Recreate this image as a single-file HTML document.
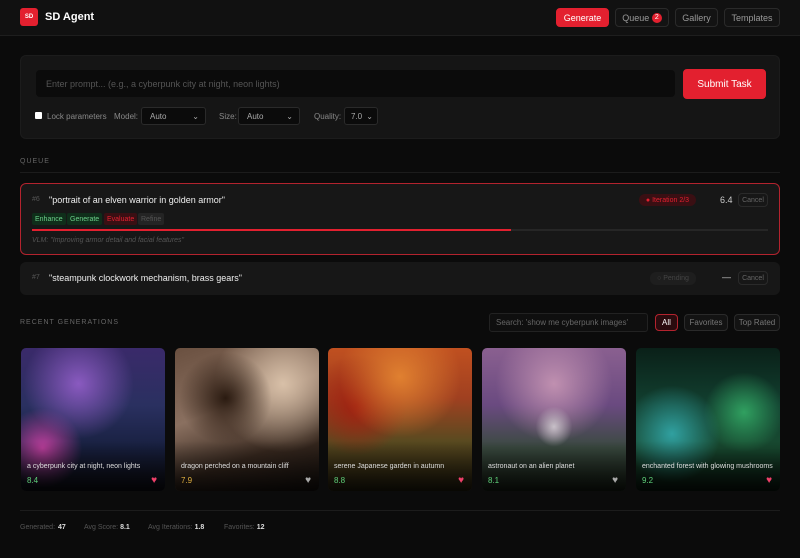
<!DOCTYPE html>
<html><head><style>
*{box-sizing:border-box;margin:0;padding:0}
body{width:800px;height:558px;background:#0b0b0b;font-family:"Liberation Sans Narrow","Liberation Sans",sans-serif;color:#ddd;position:relative;overflow:hidden;font-size:9px}
.a{position:absolute}
.hdr{left:0;top:0;width:800px;height:36px;background:#111;border-bottom:1px solid #1e1e1e}
.btn{position:absolute;border:1px solid #2a2a2a;border-radius:4px;color:#999;font-size:9px;display:flex;align-items:center;justify-content:center;background:#131313}
.red{background:#e3202f;border-color:#e3202f;color:#fff}
.sel{background:#0b0b0b;border:1px solid #2a2a2a;border-radius:3px;color:#aaa;font-size:8px;padding-left:8px;display:flex;align-items:center}
.lbl{color:#888;font-size:8px}
.card{position:absolute;top:348px;width:144px;height:143px;border-radius:5px;overflow:hidden}
.card .t{position:absolute;left:6px;bottom:21px;font-size:7px;color:#ddd}
.card .s{position:absolute;left:6px;bottom:6px;font-size:8px;color:#5fd07a}
.card .h{position:absolute;right:8px;bottom:5px;font-size:10px;color:#f0406a}
.card .sh{position:absolute;left:0;right:0;bottom:0;height:50px;background:linear-gradient(transparent,rgba(0,0,0,.8))}
.step{position:absolute;top:213px;height:12px;font-size:7px;display:flex;align-items:center;padding:0 3px;border-radius:2px}
</style></head><body>
<div class="a hdr"></div>
<div class="a" style="left:20px;top:8px;width:18px;height:18px;background:#e3202f;border-radius:3px;color:#fff;font-size:6px;font-weight:bold;display:flex;align-items:center;justify-content:center">SD</div>
<div class="a" style="left:45px;top:11px;font-size:11px;font-weight:bold;color:#fff;font-family:'Liberation Sans',sans-serif">SD Agent</div>
<div class="btn red" style="left:556px;top:8px;width:53px;height:19px">Generate</div>
<div class="btn" style="left:615px;top:8px;width:54px;height:19px">Queue&nbsp;<span style="background:#e3202f;color:#fff;border-radius:50%;width:10px;height:10px;font-size:7px;display:inline-flex;align-items:center;justify-content:center">2</span></div>
<div class="btn" style="left:675px;top:8px;width:43px;height:19px">Gallery</div>
<div class="btn" style="left:724px;top:8px;width:56px;height:19px">Templates</div>

<div class="a" style="left:20px;top:55px;width:760px;height:84px;background:#151515;border-radius:6px;border:1px solid #1c1c1c"></div>
<div class="a" style="left:36px;top:70px;width:639px;height:27px;background:#0b0b0b;border-radius:4px;color:#555;font-size:9px;padding:9px 10px">Enter prompt... (e.g., a cyberpunk city at night, neon lights)</div>
<div class="btn red" style="left:683px;top:69px;width:83px;height:30px;font-size:10px;border-radius:4px">Submit Task</div>
<div class="a" style="left:35px;top:112px;width:7px;height:7px;background:#fff;border-radius:1px"></div>
<div class="a lbl" style="left:47px;top:112px">Lock parameters</div>
<div class="a lbl" style="left:114px;top:112px">Model:</div>
<div class="a sel" style="left:141px;top:107px;width:65px;height:18px">Auto<span style="margin-left:auto;margin-right:6px">⌄</span></div>
<div class="a lbl" style="left:219px;top:112px">Size:</div>
<div class="a sel" style="left:238px;top:107px;width:62px;height:18px">Auto<span style="margin-left:auto;margin-right:6px">⌄</span></div>
<div class="a lbl" style="left:314px;top:112px">Quality:</div>
<div class="a sel" style="left:344px;top:107px;width:34px;height:18px;padding-left:6px">7.0<span style="margin-left:auto;margin-right:4px">⌄</span></div>

<div class="a" style="left:20px;top:158px;font-size:7px;color:#666;letter-spacing:1px">QUEUE</div>
<div class="a" style="left:20px;top:172px;width:760px;height:1px;background:#1c1c1c"></div>

<div class="a" style="left:20px;top:183px;width:760px;height:72px;background:#171717;border:1px solid #b3232e;border-radius:6px"></div>
<div class="a" style="left:32px;top:196px;font-size:7px;color:#555">#6</div>
<div class="a" style="left:49px;top:195px;font-size:9px;color:#eee">"portrait of an elven warrior in golden armor"</div>
<div class="a" style="left:639px;top:194px;width:57px;height:12px;background:#3a0f13;border-radius:6px;color:#e3202f;font-size:7px;display:flex;align-items:center;justify-content:center">● Iteration 2/3</div>
<div class="a" style="left:720px;top:195px;font-size:9px;color:#ccc">6.4</div>
<div class="btn" style="left:738px;top:193px;width:30px;height:14px;font-size:7px;color:#666;background:#171717">Cancel</div>
<div class="step" style="left:32px;background:#0f2e1a;color:#6bd08a">Enhance</div>
<div class="step" style="left:67px;background:#0f2e1a;color:#6bd08a">Generate</div>
<div class="step" style="left:104px;background:#3a0f13;color:#e3202f">Evaluate</div>
<div class="step" style="left:138px;background:#242424;color:#555">Refine</div>
<div class="a" style="left:32px;top:229px;width:736px;height:2px;background:#262626"></div>
<div class="a" style="left:32px;top:229px;width:479px;height:2px;background:#e3202f"></div>
<div class="a" style="left:32px;top:237px;font-size:7px;color:#555;font-style:italic">VLM: "Improving armor detail and facial features"</div>

<div class="a" style="left:20px;top:262px;width:760px;height:33px;background:#171717;border-radius:6px"></div>
<div class="a" style="left:32px;top:274px;font-size:7px;color:#555">#7</div>
<div class="a" style="left:49px;top:273px;font-size:9px;color:#eee">"steampunk clockwork mechanism, brass gears"</div>
<div class="a" style="left:650px;top:272px;width:46px;height:13px;background:#1e1e1e;border-radius:6px;color:#444;font-size:7px;display:flex;align-items:center;justify-content:center">○ Pending</div>
<div class="a" style="left:722px;top:272px;color:#ccc">—</div>
<div class="btn" style="left:738px;top:271px;width:30px;height:14px;font-size:7px;color:#666;background:#171717">Cancel</div>

<div class="a" style="left:20px;top:319px;font-size:7px;color:#666;letter-spacing:1px">RECENT GENERATIONS</div>
<div class="a" style="left:489px;top:313px;width:159px;height:19px;background:#0f0f0f;border:1px solid #222;border-radius:3px;color:#666;font-size:8px;padding:4px 6px">Search: 'show me cyberpunk images'</div>
<div class="btn" style="left:655px;top:314px;width:23px;height:17px;border-color:#b3232e;background:#2a0b0e;color:#fff;font-size:8px">All</div>
<div class="btn" style="left:684px;top:314px;width:44px;height:17px;font-size:8px;color:#777">Favorites</div>
<div class="btn" style="left:734px;top:314px;width:46px;height:17px;font-size:8px;color:#777">Top Rated</div>

<div class="card" style="left:21px;background:radial-gradient(circle at 40% 25%,#8a5ac0,transparent 40%),radial-gradient(circle at 15% 70%,#c040a0,transparent 25%),linear-gradient(180deg,#3a2a6a,#2a3060 40%,#182040 70%,#101018)"><div class="sh"></div><div class="t">a cyberpunk city at night, neon lights</div><div class="s">8.4</div><div class="h">♥</div></div>
<div class="card" style="left:175px;background:radial-gradient(ellipse at 35% 35%,#2a1a10,transparent 35%),radial-gradient(circle at 75% 25%,#d8c0a8,transparent 45%),linear-gradient(160deg,#6a5040,#8a7060 40%,#3a2a20 70%,#1a1410)"><div class="sh"></div><div class="t">dragon perched on a mountain cliff</div><div class="s" style="color:#e0b040">7.9</div><div class="h" style="color:#aaa">♥</div></div>
<div class="card" style="left:328px;background:radial-gradient(circle at 50% 20%,#e08030,transparent 45%),radial-gradient(circle at 20% 40%,#a02010,transparent 35%),linear-gradient(180deg,#c05020,#a04020 35%,#5a4a20 65%,#2a2410)"><div class="sh"></div><div class="t">serene Japanese garden in autumn</div><div class="s">8.8</div><div class="h">♥</div></div>
<div class="card" style="left:482px;background:radial-gradient(ellipse at 50% 55%,#c8c0c8,transparent 18%),radial-gradient(circle at 50% 25%,#c090b0,transparent 45%),linear-gradient(180deg,#8a6090,#6a4a80 40%,#3a4a40 70%,#1a2418)"><div class="sh"></div><div class="t">astronaut on an alien planet</div><div class="s">8.1</div><div class="h" style="color:#aaa">♥</div></div>
<div class="card" style="left:636px;background:radial-gradient(circle at 25% 60%,#30a0a0,transparent 35%),radial-gradient(circle at 75% 45%,#30a060,transparent 30%),linear-gradient(180deg,#0a2018,#124030 40%,#184a30 70%,#0a1a10)"><div class="sh"></div><div class="t">enchanted forest with glowing mushrooms</div><div class="s">9.2</div><div class="h">♥</div></div>

<div class="a" style="left:20px;top:510px;width:760px;height:1px;background:#1c1c1c"></div>
<div class="a" style="left:20px;top:524px;font-size:7px;color:#555;word-spacing:1px">Generated: <b style="color:#ddd">47</b></div>
<div class="a" style="left:84px;top:524px;font-size:7px;color:#555">Avg Score: <b style="color:#ddd">8.1</b></div>
<div class="a" style="left:148px;top:524px;font-size:7px;color:#555">Avg Iterations: <b style="color:#ddd">1.8</b></div>
<div class="a" style="left:224px;top:524px;font-size:7px;color:#555">Favorites: <b style="color:#ddd">12</b></div>
</body></html>
